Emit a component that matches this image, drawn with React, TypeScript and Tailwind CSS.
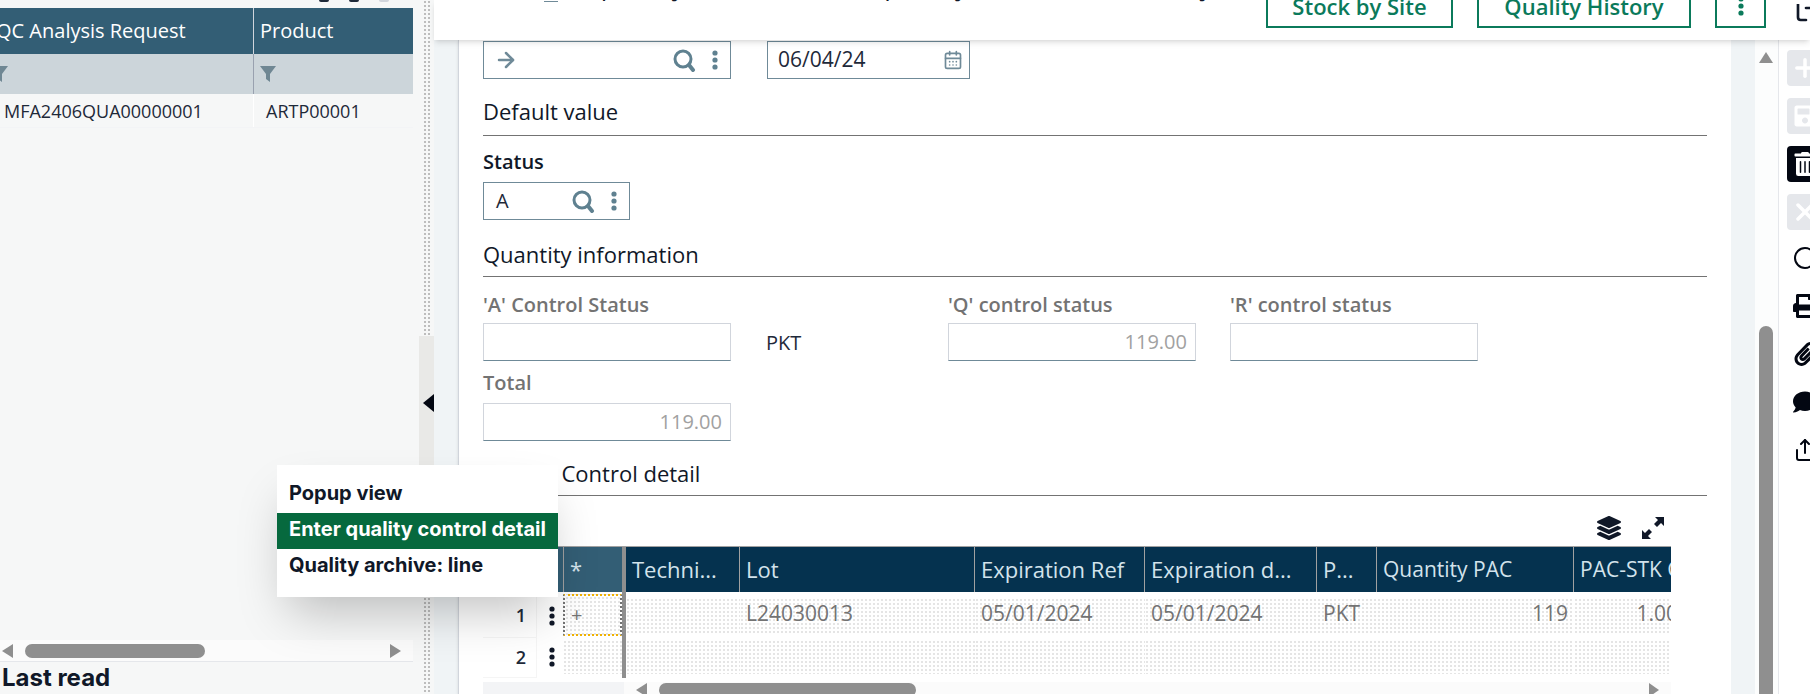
import React from "react";
import { ArrowRight, CalendarDays, LogOut, Plus, X, Circle, Share } from "lucide-react";
import { FaSave, FaTrashAlt, FaPrint, FaPaperclip, FaComment, FaLayerGroup } from "react-icons/fa";

const Dots = ({ className = "" }: { className?: string }) => (
  <svg viewBox="0 0 6 20" className={"w-1.5 h-5 " + className} fill="currentColor">
    <circle cx="3" cy="3" r="2.6" />
    <circle cx="3" cy="10" r="2.6" />
    <circle cx="3" cy="17" r="2.6" />
  </svg>
);

const Glass = () => (
  <svg viewBox="0 0 24 24" className="w-6 h-6 text-[#5f8190]" fill="none" stroke="currentColor">
    <circle cx="11" cy="11" r="8" strokeWidth="3" />
    <path d="M17 17l4 5" strokeWidth="4" strokeLinecap="round" />
  </svg>
);

const Funnel = () => (
  <svg viewBox="0 0 16 16" className="w-4 h-4 text-[#6f8793]" fill="currentColor">
    <path d="M0 0h16L10 8v8L6 13V8z" />
  </svg>
);

const Expand = () => (
  <svg viewBox="0 0 24 24" className="w-6 h-6 text-gray-900" fill="currentColor">
    <path d="M14 1h9v9l-3-3-4 4-3-3 4-4zM1 14l3 3 4-4 3 3-4 4 3 3H1z" />
  </svg>
);

const dotted = "bg-[radial-gradient(#e5e5e5_1px,transparent_1px)] bg-[size:4px_4px]";
const strip = "bg-[radial-gradient(#bdbdbd_1px,transparent_1px)] bg-[size:4px_4px]";

const Lookup = ({ width, value }: { width: string; value: React.ReactNode }) => (
  <div className={"h-9.5 border border-[#6f8a98] flex items-center pl-3 pr-3 gap-4 " + width}>
    <div className="flex-1 text-xl text-gray-800">{value}</div>
    <Glass />
    <Dots className="text-[#5f8190]" />
  </div>
);

const ReadField = ({ value, className = "" }: { value?: string; className?: string }) => (
  <div className={"w-62 h-9.5 border border-gray-300 border-b-[#6f8a98] flex items-center justify-end px-2 text-xl text-neutral-400 " + className}>
    {value}
  </div>
);

const Section = ({ title, className = "" }: { title: string; className?: string }) => (
  <div className={"border-b border-neutral-500 text-[22px] leading-7 text-gray-900 " + className}>{title}</div>
);

const Label = ({ text, className = "" }: { text: string; className?: string }) => (
  <div className={"text-xl leading-6 font-semibold " + className}>{text}</div>
);

const TopBtn = ({ children, className = "" }: { children: React.ReactNode; className?: string }) => (
  <div className={"h-12 pt-1 border-2 border-[#0b7a5b] text-[#0b7a5b] text-[22px] font-semibold flex items-center justify-center shrink-0 " + className}>
    {children}
  </div>
);

const grid = "grid grid-cols-[54px_26px_59px_4px_114px_235px_170px_172px_60px_197px_174px]";
const heads: [string, string][] = [
  ["Techni...", "text-[22px]"],
  ["Lot", "text-[22px]"],
  ["Expiration Ref", "text-[22px]"],
  ["Expiration d...", "text-[22px]"],
  ["P...", "text-[22px]"],
  ["Quantity PAC", "text-[21px]"],
  ["PAC-STK Coefficient", "text-[21px]"],
];

const row1: [string, string][] = [
  ["", ""],
  ["L24030013", ""],
  ["05/01/2024", ""],
  ["05/01/2024", ""],
  ["PKT", ""],
  ["119", "justify-end"],
  ["1.000000", "justify-end mr-4"],
];

function DataRow({ n, first }: { n: number; first?: boolean }) {
  return (
    <div className={grid + " h-10.5"}>
      <div className="flex items-center justify-end pr-2.5 font-semibold text-lg text-gray-800 border-r border-b border-neutral-100">{n}</div>
      <div className="flex items-center justify-start pl-3 text-gray-900">
        <Dots />
      </div>
      {first ? (
        <div className={"flex items-center pl-1.5 text-xl text-neutral-500 border-2 border-dotted border-x-neutral-500 border-y-yellow-500 mb-0.5 " + dotted}>+</div>
      ) : (
        <div className={"my-1 " + dotted} />
      )}
      <div className="bg-[#8f8f8f]" />
      {row1.map(([v, cls], i) => (
        <div key={i} className={"my-1 flex items-center px-1.5 pb-1 text-[21px] text-neutral-500 whitespace-nowrap " + dotted + " " + cls}>
          {first ? v : ""}
        </div>
      ))}
    </div>
  );
}

export default function App() {
  return (
    <div className="relative w-full h-[694px] flex overflow-hidden bg-white font-['Open_Sans',sans-serif] text-gray-900">
      {/* left panel */}
      <div className="w-[413px] shrink-0 flex flex-col bg-[#f6f7f7]">
        <div className="h-2 flex justify-end gap-5 pr-6">
          <div className="w-2.5 h-0.5 bg-gray-800 rounded-b" />
          <div className="w-2.5 h-0.5 bg-gray-800 rounded-b" />
          <div className="w-2.5 h-0.5 bg-gray-300 rounded-b" />
        </div>
        <div className="flex h-11.5 bg-[#335e75] text-white text-xl">
          <div className="w-[254px] flex items-center border-r border-gray-300 -indent-1 whitespace-nowrap overflow-hidden">QC Analysis Request</div>
          <div className="flex-1 flex items-center pl-1.5">Product</div>
        </div>
        <div className="flex h-10 bg-[#ccd5da]">
          <div className="w-[254px] flex items-center border-r border-gray-400">
            <div className="-ml-2">
              <Funnel />
            </div>
          </div>
          <div className="flex-1 flex items-center pl-1.5">
            <Funnel />
          </div>
        </div>
        <div className="flex h-8.5 text-lg text-gray-800 border-b border-gray-100">
          <div className="w-[254px] flex items-center pl-1 border-r border-white">MFA2406QUA00000001</div>
          <div className="flex-1 flex items-center pl-3">ARTP00001</div>
        </div>
        <div className="flex-1" />
        <div className="h-5.5 flex items-center justify-between px-0.5 pr-3 bg-[#fbfbfb] border-b border-gray-200">
          <div className="flex items-center gap-3">
            <div className="w-0 h-0 border-y-[7px] border-y-transparent border-r-[11px] border-r-[#8f8f8f]" />
            <div className="w-45 h-3.5 rounded-full bg-[#8f8f8f]" />
          </div>
          <div className="w-0 h-0 border-y-[7px] border-y-transparent border-l-[11px] border-l-[#8f8f8f]" />
        </div>
        <div className="h-8 flex items-center pl-0.5 font-['Inter',sans-serif] font-bold text-2xl text-gray-900">Last read</div>
      </div>

      {/* divider */}
      <div className="w-[21px] shrink-0 flex flex-col bg-[#f6f7f7]">
        <div className={"h-[336px] w-2 ml-2.5 " + strip} />
        <div className="flex-1 ml-1.5 bg-[#e9e9e7] flex items-center justify-end pb-16">
          <div className="w-0 h-0 border-y-[9px] border-y-transparent border-r-[11px] border-r-gray-950 mb-16" />
        </div>
        <div className={"h-[97px] w-2 ml-2.5 " + strip} />
      </div>

      {/* main */}
      <div className="flex-1 min-w-0 flex flex-col">
        <div className="h-10 shrink-0 relative z-10 bg-white shadow-md overflow-hidden flex items-end justify-between">
          <div className="flex items-end pl-8 pb-9 text-xl leading-7 font-bold font-['Inter',sans-serif] whitespace-nowrap">
            <div className="flex gap-5 font-normal text-gray-400">
              <span>/</span>
              <span>/</span>
              <span>/</span>
            </div>
            <div className="w-3.5 h-px bg-[#6f8a98] ml-4 mb-0.5" />
            <span className="ml-11">, Quality</span>
            <span className="ml-2">control details enter,</span>
            <span className="ml-1">Quality</span>
            <span className="ml-12">control details entry</span>
          </div>
          <div className="flex items-end gap-6 pb-3 pl-2">
            <TopBtn className="w-[187px]">Stock by Site</TopBtn>
            <TopBtn className="w-[214px]">Quality History</TopBtn>
            <TopBtn className="w-[51px]">
              <Dots />
            </TopBtn>
            <div className="w-5 flex items-start overflow-hidden pl-1 pb-1">
              <LogOut className="w-8 h-8 shrink-0 -mt-3 text-gray-900" />
            </div>
          </div>
        </div>

        <div className="flex-1 min-h-0 flex">
          <div className="w-6 bg-[#f0f4f6]" />
          <div className="flex-1 min-w-0 bg-white border-l border-gray-300 pl-6 pr-6 overflow-hidden shadow-sm">
            <div className="flex gap-9 mt-px">
              <Lookup width="w-62" value={<ArrowRight className="w-6 h-6 text-[#6f8a98] -ml-0.5" strokeWidth={2.5} />} />
              <div className="w-[203px] h-9.5 border border-[#6f8a98] flex items-center pl-2.5 pr-1.5 text-[21px] text-gray-800">
                <span className="flex-1">06/04/24</span>
                <CalendarDays className="w-5 h-5 text-[#6f8a98]" />
              </div>
            </div>
            <Section title="Default value" className="mt-4.5 pb-2.5" />
            <Label text="Status" className="mt-3.5 mb-2" />
            <Lookup width="w-[147px]" value="A" />
            <Section title="Quantity information" className="mt-5 pb-2" />
            <div className="flex mt-4 text-neutral-500">
              <div className="w-[283px]">
                <Label text="'A' Control Status" className="mb-1.5" />
                <ReadField />
              </div>
              <div className="w-[182px] pt-8 text-xl text-gray-800 flex items-center">PKT</div>
              <div className="w-[282px]">
                <Label text="'Q' control status" className="mb-1.5" />
                <ReadField value="119.00" />
              </div>
              <div>
                <Label text="'R' control status" className="mb-1.5" />
                <ReadField />
              </div>
            </div>
            <Label text="Total" className="mt-2.5 mb-2 text-neutral-500" />
            <ReadField value="119.00" />
            <Section title="Quality Control detail" className="mt-4.5 pb-2" />

            <div className="flex justify-end items-center gap-5 h-6 mt-5 mb-1.5 w-[1188px] pr-1.5">
              <FaLayerGroup className="w-6 h-6 text-gray-900" />
              <Expand />
            </div>

            <div className="w-[1188px] overflow-hidden">
              <div className={grid + " h-11.5 border-t border-neutral-400 text-[#d3e3ec] whitespace-nowrap"}>
                <div className="col-span-2 bg-[#335e75]" />
                <div className="bg-[#335e75] border-l border-neutral-400 pl-1.5 flex items-center text-[22px]">*</div>
                <div className="bg-[#8f8f8f]" />
                {heads.map(([h, size]) => (
                  <div key={h} className={"bg-[#05324f] border-r border-neutral-400 flex items-center pl-1.5 overflow-hidden " + size}>
                    {h}
                  </div>
                ))}
              </div>
              <div className={grid + " h-0.5"}>
                <div className="col-start-4 bg-[#8f8f8f]" />
              </div>
              <DataRow n={1} first />
              <DataRow n={2} />
              <div className="flex h-4 mt-1">
                <div className="w-[141px] bg-gray-100" />
                <div className="flex-1 bg-[#fbfbfb] flex items-center pl-3 pr-3 gap-3">
                  <div className="w-0 h-0 border-y-[7px] border-y-transparent border-r-[11px] border-r-[#8f8f8f]" />
                  <div className="w-[257px] h-3.5 rounded-full bg-[#8f8f8f]" />
                  <div className="flex-1" />
                  <div className="w-0 h-0 border-y-[7px] border-y-transparent border-l-[10px] border-l-[#8f8f8f]" />
                </div>
              </div>
            </div>
          </div>

          {/* scroll */}
          <div className="w-[47px] shrink-0 flex bg-[#fcfdfd]">
            <div className="w-6 bg-[#f0f4f6]" />
            <div className="flex-1 flex flex-col pl-1 pt-3">
              <div className="w-0 h-0 border-x-[7px] border-x-transparent border-b-[11px] border-b-[#8f8f8f]" />
              <div className="flex-1" />
              <div className="w-3.5 h-[368px] rounded-t-full bg-[#8f8f8f]" />
            </div>
          </div>

          {/* tool bar */}
          <div className="w-8 shrink-0 bg-white border-l border-gray-200 flex flex-col pl-2 pt-2.5 gap-3 overflow-hidden">
            <div className="w-9 h-9 shrink-0 rounded bg-gray-200 flex items-center pl-1 text-white"><Plus className="w-7 h-7 shrink-0" strokeWidth={3} /></div>
            <div className="w-9 h-9 shrink-0 rounded bg-gray-200 flex items-center pl-1.5 text-white"><FaSave className="w-6 h-6 shrink-0" /></div>
            <div className="w-9 h-9 shrink-0 rounded bg-gray-950 flex items-center pl-1.5 text-white"><FaTrashAlt className="w-6 h-6 shrink-0" /></div>
            <div className="w-9 h-9 shrink-0 rounded bg-gray-200 flex items-center pl-1 text-white"><X className="w-7 h-7 shrink-0" strokeWidth={3} /></div>
            <div className="flex flex-col gap-6 pl-1.5 mt-1 text-gray-950">
              <Circle className="w-6 h-6 shrink-0" />
              <FaPrint className="w-6 h-6 shrink-0" />
              <FaPaperclip className="w-6 h-6 shrink-0" />
              <FaComment className="w-6 h-6 shrink-0" />
              <Share className="w-6 h-6 shrink-0" />
            </div>
          </div>
        </div>
      </div>

      {/* context menu */}
      <div className="absolute left-[277px] top-[465px] z-20 w-[281px] h-[132px] bg-white shadow-2xl font-['Inter',sans-serif] font-bold text-xl text-gray-900 flex flex-col pt-3">
        <div className="h-9 flex items-center pl-3 pb-1">Popup view</div>
        <div className="h-9 flex items-center pl-3 pb-1 bg-[#06693e] text-white whitespace-nowrap">Enter quality control detail</div>
        <div className="h-9 flex items-center pl-3 pb-1">Quality archive: line</div>
      </div>
    </div>
  );
}
